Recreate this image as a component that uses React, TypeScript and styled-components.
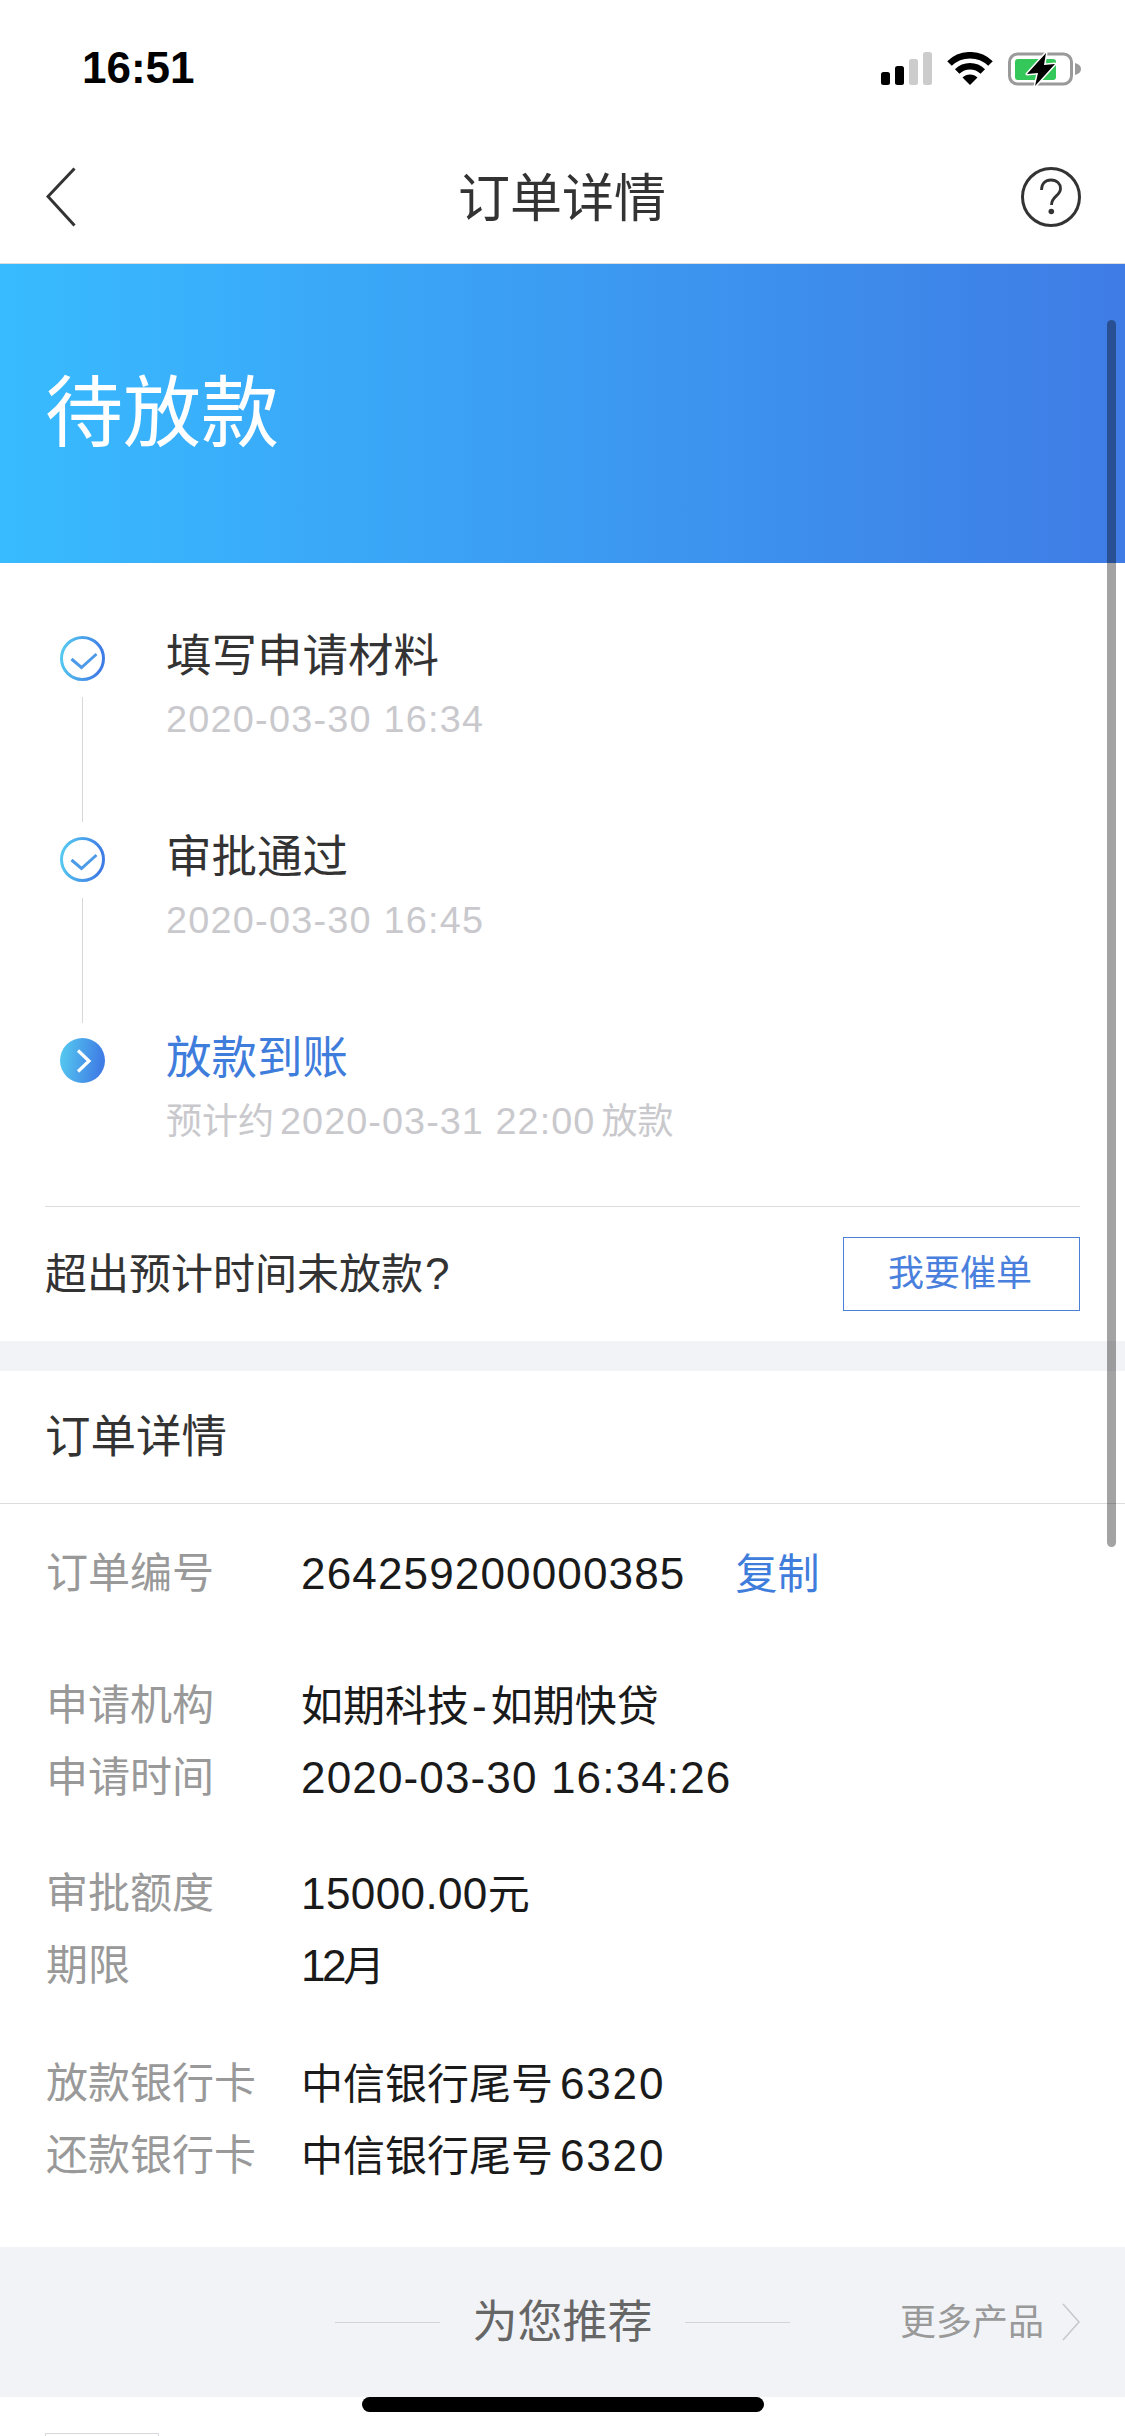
import React from "react";
import styled, { createGlobalStyle } from "styled-components";

const Global = createGlobalStyle`
  html, body { margin: 0; padding: 0; background: #fff; }
  * { box-sizing: border-box; }
`;

const Page = styled.div`
  position: relative;
  width: 1125px;
  height: 2436px;
  overflow: hidden;
  background: #fff;
  font-family: "Liberation Sans", "Noto Sans CJK SC", sans-serif;
  color: #333;
`;

const StatusBar = styled.div`
  height: 132px;
  padding: 0 43px 0 82px;
  display: flex;
  align-items: flex-start;
  justify-content: space-between;
`;

const Clock = styled.div`
  margin-top: 43px;
  font-size: 44px;
  line-height: 50px;
  font-weight: 700;
  color: #000;
`;

const StatusIcons = styled.div`
  margin-top: 52px;
  display: flex;
  align-items: flex-start;
  gap: 15px;
`;

const Nav = styled.div`
  height: 132px;
  padding: 0 44px 2px 46px;
  display: grid;
  grid-template-columns: 1fr auto 1fr;
  align-items: center;
  border-bottom: 1px solid #ddd;
`;

const NavTitle = styled.div`
  font-size: 52px;
  line-height: 70px;
  padding: 4px 3px 0 0;
  color: #333;
`;

const NavEnd = styled.div`
  display: flex;
  justify-content: flex-end;
`;

const Banner = styled.div`
  height: 299px;
  padding-left: 45px;
  display: flex;
  align-items: center;
  background: linear-gradient(to right, #38bbff, #3f7ce5);
  color: #fff;
  font-size: 78px;
  line-height: 90px;
  font-weight: 400;
`;

const Timeline = styled.div`
  padding: 62px 0 0 60px;
`;

const Step = styled.div`
  display: flex;
  height: ${(p: { $last?: boolean }) => (p.$last ? "179px" : "201px")};
`;

const Rail = styled.div`
  width: 45px;
  margin-right: 61px;
  padding-top: 11px;
  display: flex;
  flex-direction: column;
  align-items: center;
`;

const RailLine = styled.div`
  width: 1px;
  flex: 1;
  margin: 16px 0 4px;
  background: #d8d8dc;
`;

const StepText = styled.div`
  padding-top: 1px;
`;

const StepTitle = styled.div<{ $active?: boolean }>`
  font-size: 45.5px;
  line-height: 62px;
  color: ${(p) => (p.$active ? "#3f7ddc" : "#333")};
`;

const StepMeta = styled.div`
  font-size: 36px;
  line-height: 62px;
  color: #c9c9cd;
`;

const Num = styled.span<{ $gap?: number; $track?: number }>`
  font-size: 1.05em;
  letter-spacing: ${(p) => p.$track ?? 0.025}em;
  margin: 0 ${(p) => p.$gap ?? 0}px;
`;

const Divider = styled.div`
  height: 1px;
  margin: 0 45px;
  background: #ddd;
`;

const UrgeRow = styled.div`
  height: 134px;
  padding: 0 45px;
  display: flex;
  align-items: center;
  justify-content: space-between;
`;

const UrgeText = styled.div`
  font-size: 42px;
  line-height: 60px;
  color: #333;
`;

const UrgeButton = styled.button`
  width: 237px;
  height: 74px;
  padding: 0 3px 0 0;
  background: #fff;
  border: 1px solid #4a80d8;
  border-radius: 0;
  color: #4a80dd;
  font: inherit;
  font-size: 36px;
  line-height: 50px;
`;

const Band = styled.div`
  height: 30px;
  background: #f2f3f7;
`;

const SectionHead = styled.div`
  height: 133px;
  padding: 2px 45px 0;
  display: flex;
  align-items: center;
  border-bottom: 1px solid #ddd;
  font-size: 45.5px;
  line-height: 60px;
  color: #333;
`;

const Details = styled.div`
  padding: 33px 0 56px 46px;
`;

const Group = styled.div<{ $gap: number }>`
  margin-bottom: ${(p) => p.$gap}px;
  &:last-child { margin-bottom: 0; }
`;

const Row = styled.div`
  display: flex;
  height: 72px;
  line-height: 74px;
  font-size: 42px;
`;

const Label = styled.div`
  width: 255px;
  color: #999;
`;

const Value = styled.div`
  color: #1a1a1a;
  white-space: pre;
`;

const CopyLink = styled.span`
  margin-left: 50px;
  color: #3f7ddc;
`;

const Recommend = styled.div`
  height: 150px;
  padding: 2px 45px 0;
  display: grid;
  grid-template-columns: 1fr auto 1fr;
  align-items: center;
  background: #f2f3f7;
`;

const RecTitle = styled.div`
  display: flex;
  align-items: center;
  gap: 32px;
  font-size: 45px;
  line-height: 60px;
  color: #666;
`;

const RecLine = styled.div`
  width: 105px;
  height: 1px;
  margin-bottom: 2px;
  background: #d4d4d8;
`;

const More = styled.div`
  display: flex;
  align-items: center;
  justify-content: flex-end;
  gap: 18px;
  font-size: 36px;
  line-height: 50px;
  color: #999;
`;

const MoreMark = styled.svg`
  margin-bottom: 2px;
`;

const PeekCard = styled.div`
  width: 114px;
  height: 60px;
  margin: 36px 0 0 45px;
  border: 1px solid #d8d8dc;
`;

const HomeBar = styled.div`
  position: absolute;
  left: 362px;
  top: 2397px;
  width: 402px;
  height: 15px;
  border-radius: 8px;
  background: #000;
`;

const ScrollThumb = styled.div`
  position: absolute;
  left: 1107px;
  top: 320px;
  width: 9px;
  height: 1227px;
  border-radius: 5px;
  background: rgba(0, 0, 0, 0.36);
`;

const Signal = () => (
  <svg width="51" height="33" viewBox="0 0 51 33">
    <rect x="0" y="20" width="9" height="13" rx="2.5" fill="#000" />
    <rect x="14" y="14" width="9" height="19" rx="2.5" fill="#000" />
    <rect x="28" y="7" width="9" height="26" rx="2.5" fill="#ccc" />
    <rect x="42" y="0" width="9" height="33" rx="2.5" fill="#ccc" />
  </svg>
);

const Wifi = () => (
  <svg width="46" height="33" viewBox="0 0 46 33">
    <path d="M2.5 11.5A29.5 29.5 0 0 1 43.5 11.5" fill="none" stroke="#000" strokeWidth="6.5" />
    <path d="M10.2 19.5A18.5 18.5 0 0 1 35.8 19.5" fill="none" stroke="#000" strokeWidth="6.5" />
    <path d="M23 33L15.5 25.5A10.6 10.6 0 0 1 30.5 25.5Z" fill="#000" />
  </svg>
);

const Battery = () => (
  <svg width="74" height="35" viewBox="0 0 74 35">
    <rect x="1.5" y="2" width="62" height="30" rx="8" fill="none" stroke="#9a9a9a" strokeWidth="3" />
    <rect x="7" y="7" width="41" height="21" rx="3" fill="#34c759" />
    <path d="M67 11C71 12 73 14 73 17S71 22 67 23Z" fill="#9a9a9a" />
    <path
      d="M38 1L19 22L30 21L27 34L47 12L36 13Z"
      fill="#000"
      stroke="#fff"
      strokeWidth="3"
      paintOrder="stroke"
      strokeLinejoin="round"
    />
  </svg>
);

const Back = () => (
  <svg width="30" height="60" viewBox="0 0 30 60">
    <path d="M28.5 1.5L2 29.5L28.5 58.5" fill="none" stroke="#333" strokeWidth="3" />
  </svg>
);

const Help = () => (
  <svg width="60" height="60" viewBox="0 0 60 60">
    <circle cx="30" cy="30" r="28.5" fill="none" stroke="#333" strokeWidth="3" />
    <path d="M20.5 23C20.5 16.5 24.5 13 30 13C36 13 39.5 17 39.5 21.5C39.5 29 30.5 29 30.5 38" fill="none" stroke="#333" strokeWidth="2.8" />
    <circle cx="30.3" cy="44.5" r="2.8" fill="#333" />
  </svg>
);

const Grad = ({ id }: { id: string }) => (
  <defs>
    <linearGradient id={id} x1="0" y1="0" x2="1" y2="0.15">
      <stop offset="0" stopColor="#56cdf0" />
      <stop offset="1" stopColor="#3f7ce5" />
    </linearGradient>
  </defs>
);

const DoneIcon = ({ id }: { id: string }) => (
  <svg width="45" height="45" viewBox="0 0 45 45">
    <Grad id={id} />
    <circle cx="22.5" cy="22.5" r="21" fill="none" stroke={`url(#${id})`} strokeWidth="3" />
    <path d="M11.5 23L21.5 31.5L36.5 18" fill="none" stroke="#4d9be8" strokeWidth="3" />
  </svg>
);

const ActiveIcon = ({ id }: { id: string }) => (
  <svg width="45" height="45" viewBox="0 0 45 45">
    <Grad id={id} />
    <circle cx="22.5" cy="22.5" r="22.5" fill={`url(#${id})`} />
    <path d="M18 12.5L29 23L18 33.5" fill="none" stroke="#fff" strokeWidth="3.2" />
  </svg>
);

const MoreChevron = () => (
  <MoreMark width="18" height="38" viewBox="0 0 18 38">
    <path d="M1 1L17 19L1 37" fill="none" stroke="#c8c8cc" strokeWidth="1.6" />
  </MoreMark>
);

export default function App() {
  return (
    <Page>
      <Global />
      <StatusBar>
        <Clock>16:51</Clock>
        <StatusIcons>
          <Signal />
          <Wifi />
          <Battery />
        </StatusIcons>
      </StatusBar>
      <Nav>
        <Back />
        <NavTitle>订单详情</NavTitle>
        <NavEnd>
          <Help />
        </NavEnd>
      </Nav>
      <Banner>待放款</Banner>
      <Timeline>
        <Step>
          <Rail>
            <DoneIcon id="g1" />
            <RailLine />
          </Rail>
          <StepText>
            <StepTitle>填写申请材料</StepTitle>
            <StepMeta>
              <Num $track={0.033}>2020-03-30 16:34</Num>
            </StepMeta>
          </StepText>
        </Step>
        <Step>
          <Rail>
            <DoneIcon id="g2" />
            <RailLine />
          </Rail>
          <StepText>
            <StepTitle>审批通过</StepTitle>
            <StepMeta>
              <Num $track={0.033}>2020-03-30 16:45</Num>
            </StepMeta>
          </StepText>
        </Step>
        <Step $last>
          <Rail>
            <ActiveIcon id="g3" />
          </Rail>
          <StepText>
            <StepTitle $active>放款到账</StepTitle>
            <StepMeta>
              预计约<Num $gap={6} $track={0.028}>2020-03-31 22:00</Num>放款
            </StepMeta>
          </StepText>
        </Step>
      </Timeline>
      <Divider />
      <UrgeRow>
        <UrgeText>
          超出预计时间未放款<Num $gap={2}>?</Num>
        </UrgeText>
        <UrgeButton>我要催单</UrgeButton>
      </UrgeRow>
      <Band />
      <SectionHead>订单详情</SectionHead>
      <Details>
        <Group $gap={60}>
          <Row>
            <Label>订单编号</Label>
            <Value>
              <Num>264259200000385</Num>
              <CopyLink>复制</CopyLink>
            </Value>
          </Row>
        </Group>
        <Group $gap={44}>
          <Row>
            <Label>申请机构</Label>
            <Value>
              如期科技<Num $gap={3}>-</Num>如期快贷
            </Value>
          </Row>
          <Row>
            <Label>申请时间</Label>
            <Value>
              <Num>2020-03-30 16:34:26</Num>
            </Value>
          </Row>
        </Group>
        <Group $gap={46}>
          <Row>
            <Label>审批额度</Label>
            <Value>
              <Num $track={0.008}>15000.00</Num>元
            </Value>
          </Row>
          <Row>
            <Label>期限</Label>
            <Value>
              <Num $track={-0.08}>12</Num>月
            </Value>
          </Row>
        </Group>
        <Group $gap={0}>
          <Row>
            <Label>放款银行卡</Label>
            <Value>
              中信银行尾号<Num $gap={7} $track={0.04}>6320</Num>
            </Value>
          </Row>
          <Row>
            <Label>还款银行卡</Label>
            <Value>
              中信银行尾号<Num $gap={7} $track={0.04}>6320</Num>
            </Value>
          </Row>
        </Group>
      </Details>
      <Recommend>
        <div />
        <RecTitle>
          <RecLine />
          为您推荐
          <RecLine />
        </RecTitle>
        <More>
          更多产品
          <MoreChevron />
        </More>
      </Recommend>
      <PeekCard />
      <HomeBar />
      <ScrollThumb />
    </Page>
  );
}
